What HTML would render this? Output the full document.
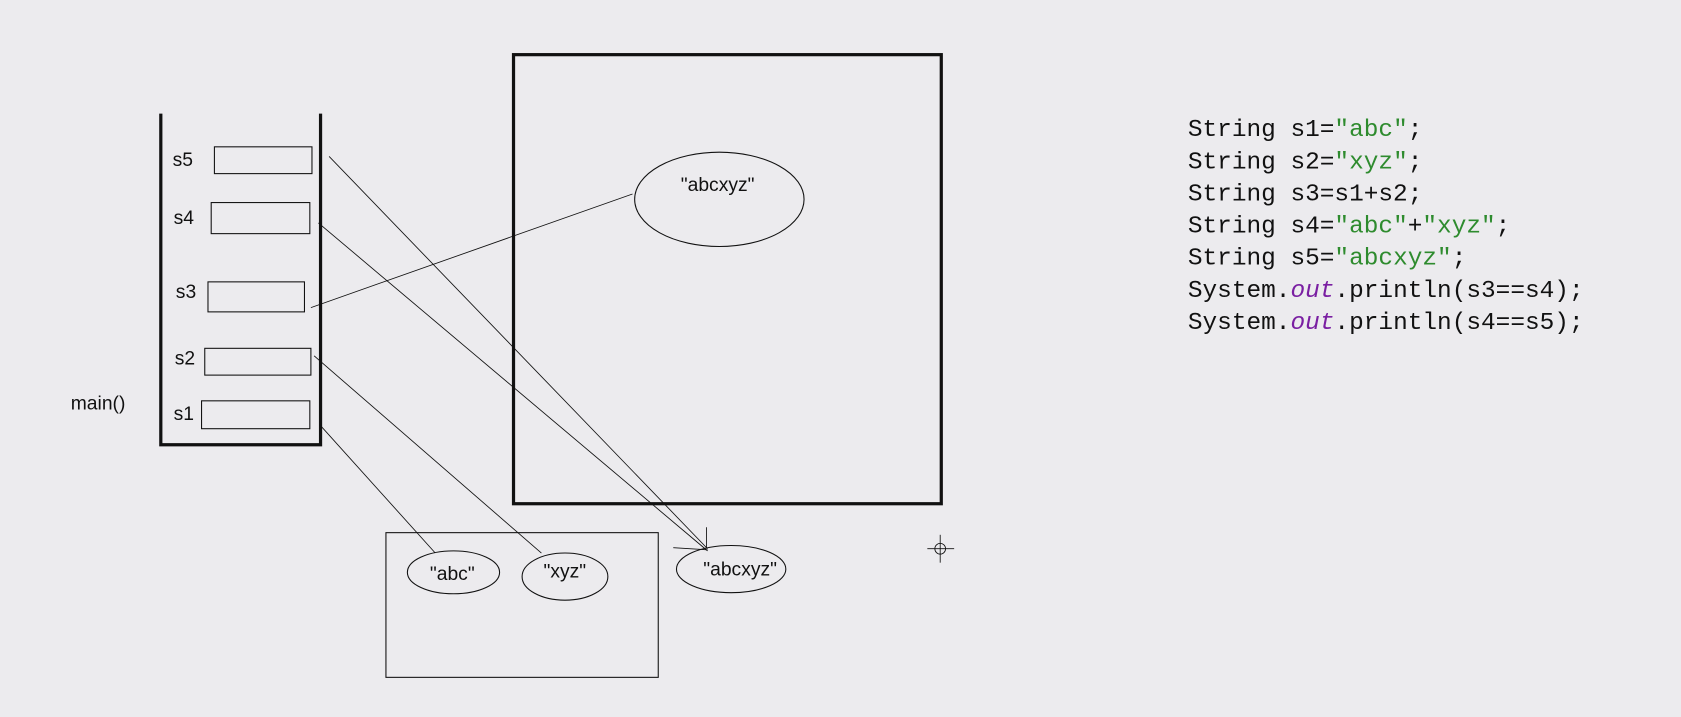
<!DOCTYPE html>
<html><head><style>
html,body{margin:0;padding:0;background:#ecebee;overflow:hidden}
svg{display:block}
text{font-family:"Liberation Sans",sans-serif}
.c{font-family:"Liberation Mono",monospace;font-size:22.8px;fill:#111}
.g{fill:#2e8b2e}.p{fill:#7a1fa2;font-style:italic}
</style></head><body>
<svg width="1681" height="717" viewBox="0 0 1568 669" preserveAspectRatio="none">
<rect width="1568" height="669" fill="#ecebee"/>
<g fill="none" stroke="#111">
<path d="M150 106V415H299V106" stroke-width="3"/>
<rect x="200" y="137" width="91" height="25"/>
<rect x="197" y="189" width="92" height="29"/>
<rect x="194" y="263" width="90" height="28"/>
<rect x="191" y="325" width="99" height="25"/>
<rect x="188" y="374" width="101" height="26"/>
<rect x="479" y="51" width="399" height="419" stroke-width="3"/>
<ellipse cx="671" cy="186" rx="79" ry="44"/>
<rect x="360" y="497" width="254" height="135"/>
<ellipse cx="423" cy="534" rx="43" ry="20"/>
<ellipse cx="527" cy="538" rx="40" ry="22"/>
<ellipse cx="682" cy="531" rx="51" ry="22"/>
<g stroke-width="0.8">
<line x1="307" y1="146" x2="660" y2="512"/>
<line x1="297" y1="208" x2="660" y2="514"/>
<line x1="290" y1="287" x2="590" y2="181"/>
<line x1="293" y1="332" x2="505" y2="516"/>
<line x1="298" y1="396" x2="406" y2="516"/>
<line x1="628" y1="511" x2="660" y2="513"/>
<line x1="659" y1="492" x2="659" y2="512"/>
<line x1="865" y1="512" x2="890" y2="512"/>
<line x1="877" y1="499" x2="877" y2="525"/>
<circle cx="877" cy="512" r="5"/>
</g>
</g>
<g font-size="18" fill="#111">
<text x="161" y="155">s5</text>
<text x="162" y="209">s4</text>
<text x="164" y="278">s3</text>
<text x="163" y="340">s2</text>
<text x="162" y="392">s1</text>
<text x="66" y="382">main()</text>
<text x="635" y="178">"abcxyz"</text>
<text x="401" y="541">"abc"</text>
<text x="507" y="539">"xyz"</text>
<text x="656" y="537">"abcxyz"</text>
</g>
<text class="c" x="1108" y="127">String s1=<tspan class="g">"abc"</tspan>;</text>
<text class="c" x="1108" y="157">String s2=<tspan class="g">"xyz"</tspan>;</text>
<text class="c" x="1108" y="187">String s3=s1+s2;</text>
<text class="c" x="1108" y="217">String s4=<tspan class="g">"abc"</tspan>+<tspan class="g">"xyz"</tspan>;</text>
<text class="c" x="1108" y="247">String s5=<tspan class="g">"abcxyz"</tspan>;</text>
<text class="c" x="1108" y="277">System.<tspan class="p">out</tspan>.println(s3==s4);</text>
<text class="c" x="1108" y="307">System.<tspan class="p">out</tspan>.println(s4==s5);</text>
</svg>
</body></html>
